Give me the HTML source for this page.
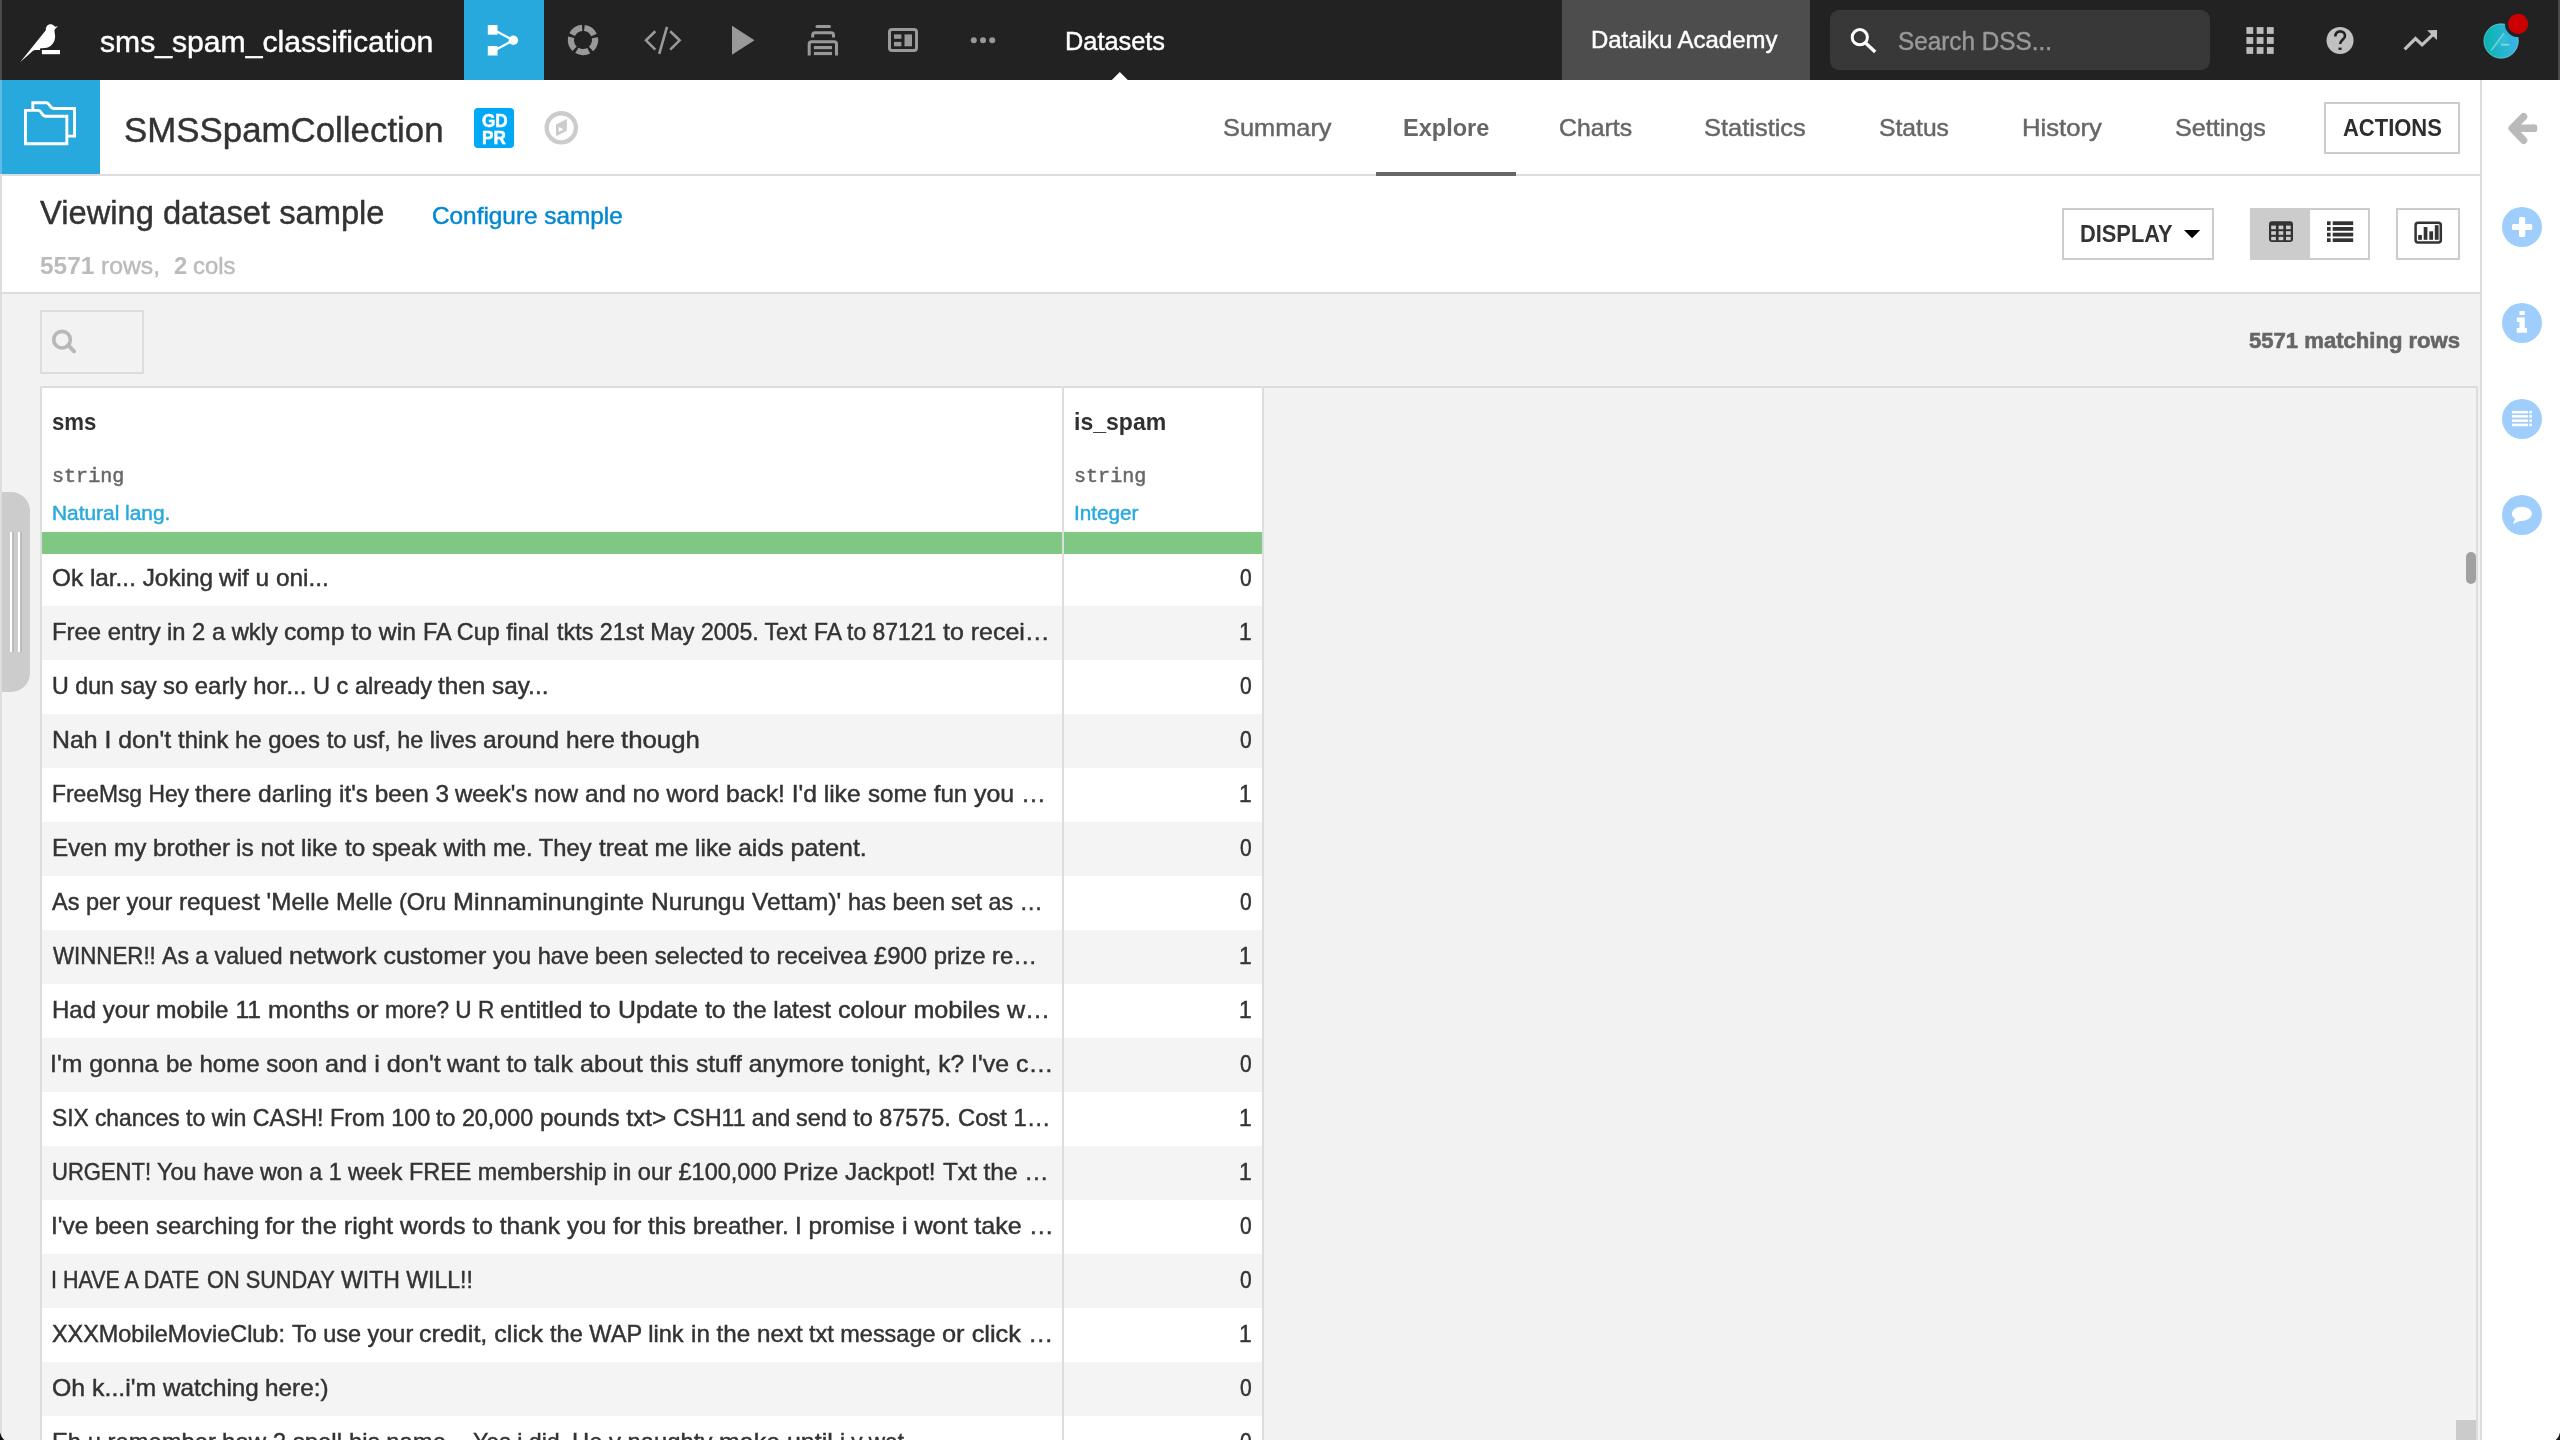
<!DOCTYPE html>
<html lang="en">
<head>
<meta charset="utf-8">
<title>SMSSpamCollection - Explore | Dataiku</title>
<style>
html,body{margin:0;padding:0;width:2560px;height:1440px;overflow:hidden;position:relative;background:#fff;font-family:"Liberation Sans",sans-serif}
.a{position:absolute;box-sizing:border-box}
.t{position:absolute;white-space:pre;line-height:1;transform-origin:0 0}
svg{position:absolute;overflow:visible}
</style>
</head>
<body>
<div id="nav" class="a" style="left:0;top:0;width:2560px;height:80px;background:#222222">
 <div class="a" style="left:464px;top:0;width:80px;height:80px;background:#28a9dd"></div>
 <div class="a" style="left:1562px;top:0;width:248px;height:80px;background:#4d4d4d"></div>
 <div class="a" style="left:1830px;top:10px;width:380px;height:60px;background:#383838;border-radius:9px"></div>
 <svg width="2560" height="80" viewBox="0 0 2560 80" style="left:0;top:0">
  <!-- bird logo -->
  <path fill="#fff" d="M20.1,62.2 L45.8,30.3 C45.6,28.8 46.2,26.6 47.6,25.3 C48.7,24.5 49.6,24.3 50.6,24.3 C51.9,24.3 53,24.9 53.9,25.7 L55.3,26.8 L58,26.2 L55.5,28.4 C54.6,29.6 54.4,30.4 54.5,31.3 C54.6,33.2 55.3,35.2 55.1,37.3 C54.9,39.8 54.2,41.8 52.8,43.6 C51.2,45.8 49.3,47.2 46.9,47.8 C44.8,48.3 42.5,48.3 40.3,48.2 L39.9,50 C37.8,50.1 35.4,49.7 33.3,50.6 Z"/>
  <rect x="41.9" y="50" width="18.1" height="4.2" fill="#fff"/>
  <!-- flow -->
  <rect x="487.8" y="25" width="9.7" height="9.7" fill="#fff"/>
  <rect x="487.8" y="46" width="9.7" height="9.5" fill="#fff"/>
  <circle cx="513.4" cy="40.3" r="4.7" fill="#fff"/>
  <path d="M494,30 L513.4,40.3 L494,50.7" stroke="#fff" stroke-width="2.2" fill="none"/>
  <!-- analysis ring -->
  <circle cx="583" cy="40" r="12.1" fill="none" stroke="#999" stroke-width="6.2" stroke-dasharray="12.4 2.8" transform="rotate(-83.3 583 40)"/>
  <!-- code -->
  <path d="M655.3,31.2 L646,40.3 L655.3,49.7 M667,26.9 L659.2,53.9 M670.2,31.2 L679.6,40.3 L670.2,49.7" stroke="#999" stroke-width="2.6" fill="none"/>
  <!-- play -->
  <path d="M732,25.8 L754.5,40.2 L732,54.7 Z" fill="#999"/>
  <!-- jobs -->
  <path d="M817,26.5 H829.5" stroke="#999" stroke-width="3" stroke-linecap="round" fill="none"/>
  <path d="M812.7,37.5 V35 Q812.7,32.7 815,32.7 H831.2 Q833.5,32.7 833.5,35 V37.5" stroke="#999" stroke-width="3" fill="none"/>
  <path d="M809.2,55.5 V44.2 Q809.2,41.8 811.6,41.8 H834.1 Q836.5,41.8 836.5,44.2 V55.5" stroke="#999" stroke-width="3" fill="none"/>
  <rect x="813.9" y="46" width="18.1" height="3.2" fill="#999"/>
  <rect x="813.9" y="51.9" width="18.1" height="3.2" fill="#999"/>
  <!-- dashboard -->
  <rect x="889.5" y="29.5" width="27" height="21" rx="2.5" fill="none" stroke="#999" stroke-width="3"/>
  <rect x="894" y="34.4" width="7.4" height="4.4" fill="#999"/>
  <rect x="894" y="41.9" width="7.4" height="4.4" fill="#999"/>
  <rect x="904.5" y="34.4" width="7.5" height="11.9" fill="#999"/>
  <!-- dots -->
  <circle cx="973.8" cy="40.2" r="3" fill="#999"/><circle cx="983" cy="40.2" r="3" fill="#999"/><circle cx="992.2" cy="40.2" r="3" fill="#999"/>
  <!-- pointer -->
  <path d="M1111.8,80 L1119.8,72 L1127.8,80 Z" fill="#fff"/>
  <!-- search -->
  <circle cx="1859.8" cy="37.2" r="7.6" fill="none" stroke="#fff" stroke-width="3"/>
  <path d="M1865.6,43 L1875.2,52" stroke="#fff" stroke-width="3.4" fill="none"/>
  <!-- apps grid -->
  <g fill="#bbb">
   <rect x="2246.4" y="27.1" width="6.8" height="6.8"/><rect x="2256.7" y="27.1" width="6.8" height="6.8"/><rect x="2266.9" y="27.1" width="6.8" height="6.8"/>
   <rect x="2246.4" y="37.1" width="6.8" height="6.8"/><rect x="2256.7" y="37.1" width="6.8" height="6.8"/><rect x="2266.9" y="37.1" width="6.8" height="6.8"/>
   <rect x="2246.4" y="47.1" width="6.8" height="6.8"/><rect x="2256.7" y="47.1" width="6.8" height="6.8"/><rect x="2266.9" y="47.1" width="6.8" height="6.8"/>
  </g>
  <!-- help -->
  <circle cx="2340.05" cy="40.4" r="13.5" fill="#c0c0c0"/>
  <path d="M2335.3,36.4 C2335.3,33.4 2337.3,31.4 2340.2,31.4 C2343.1,31.4 2345,33.4 2345,35.9 C2345,39.4 2340.1,40.3 2340.1,44" stroke="#222" stroke-width="2.6" fill="none"/>
  <rect x="2338.5" y="47.6" width="3.1" height="2.3" fill="#222"/>
  <!-- trend -->
  <path d="M2404.6,49.3 L2415.5,38.5 L2422.1,44.8 L2432.6,34.8" stroke="#c0c0c0" stroke-width="3.2" fill="none"/>
  <path d="M2427.2,30.2 L2437.1,30 L2436.9,40.1 Z" fill="#c0c0c0"/>
  <!-- avatar -->
  <defs><linearGradient id="av" x1="0" y1="0" x2="1" y2="0"><stop offset="0" stop-color="#08b4ad"/><stop offset="1" stop-color="#3cb4e8"/></linearGradient></defs>
  <circle cx="2501.1" cy="41" r="17.2" fill="url(#av)" stroke="#7fdde8" stroke-width="0.6"/>
  <path d="M2491.2,50.4 L2504,33 L2508.5,37.6 L2507,43.4 L2499.5,44.2 Z" fill="#3cc3d6" opacity="0.55"/>
  <path d="M2491.2,50.4 L2504,33" stroke="#7ad9e2" stroke-width="1.3" fill="none" opacity="0.9"/>
  <rect x="2500.9" y="43.8" width="8.5" height="1.9" fill="#8fe0e6" opacity="0.8"/>
  <circle cx="2518.1" cy="23.9" r="13.2" fill="#222"/>
  <circle cx="2518.1" cy="23.9" r="10.1" fill="#cc0000"/>
 </svg>
</div>
<div id="bar" class="a" style="left:0;top:80px;width:2480px;height:96px;background:#fff;border-bottom:2px solid #dddddd">
 <div class="a" style="left:0;top:0;width:100px;height:94px;background:#28a9dd"></div>
 <div class="a" style="left:474px;top:28px;width:40px;height:40px;background:#00a8f5;border-radius:4px"></div>
 <div class="a" style="left:1376px;top:92px;width:140px;height:4px;background:#666666"></div>
 <div class="a" style="left:2324px;top:22px;width:136px;height:52px;border:2px solid #cccccc;background:#fff"></div>
 <svg width="2480" height="96" viewBox="0 80 2480 96" style="left:0;top:0">
  <!-- dataset folders icon -->
  <path d="M32.8,109.2 V102.7 H46.3 C50,102.7 49.6,108.5 53.8,108.5 H74.55 V136.1 H68" stroke="#fff" stroke-width="2.9" fill="none"/>
  <path d="M25.45,143.7 V110.4 H38.2 C41.9,110.4 41.5,116.2 45.7,116.2 H66.85 V143.7 Z" stroke="#fff" stroke-width="2.9" fill="none"/>
  <!-- compass -->
  <circle cx="561.3" cy="127.8" r="14.6" fill="none" stroke="#cccccc" stroke-width="4.4"/>
  <path d="M566.9,119 L556,124.5 L556,136.3 L566.9,130.8 Z M558.8,126.9 L563.4,129.3 L558.8,132 Z" fill="#cccccc" fill-rule="evenodd"/>
 </svg>
</div>
<div id="subhead" class="a" style="left:0;top:176px;width:2480px;height:118px;background:#fff;border-bottom:2px solid #dddddd">
 <div class="a" style="left:2062px;top:32px;width:152px;height:52px;border:2px solid #cccccc;background:#fff"></div>
 <div class="a" style="left:2250px;top:32px;width:120px;height:52px;border:2px solid #cccccc;background:#fff"></div>
 <div class="a" style="left:2250px;top:32px;width:60px;height:52px;background:#cccccc"></div>
 <div class="a" style="left:2396px;top:32px;width:64px;height:52px;border:2px solid #cccccc;background:#fff"></div>
 <svg width="2480" height="118" viewBox="0 176 2480 118" style="left:0;top:0">
  <path d="M2184,230 H2200.2 L2192.1,238.2 Z" fill="#000"/>
  <!-- table icon -->
  <rect x="2269" y="221.3" width="24" height="20.6" rx="3" fill="#333"/>
  <g fill="#cccccc">
   <rect x="2271.2" y="225.6" width="4.7" height="3.6"/><rect x="2278.6" y="225.6" width="4.7" height="3.6"/><rect x="2286" y="225.6" width="4.7" height="3.6"/>
   <rect x="2271.2" y="231.2" width="4.7" height="3.6"/><rect x="2278.6" y="231.2" width="4.7" height="3.6"/><rect x="2286" y="231.2" width="4.7" height="3.6"/>
   <rect x="2271.2" y="236.8" width="4.7" height="3.4"/><rect x="2278.6" y="236.8" width="4.7" height="3.4"/><rect x="2286" y="236.8" width="4.7" height="3.4"/>
  </g>
  <!-- list icon -->
  <g fill="#333">
   <rect x="2327" y="221.3" width="3.6" height="3.8"/><rect x="2332.7" y="221.3" width="20.5" height="3.8"/>
   <rect x="2327" y="227" width="3.6" height="3.8"/><rect x="2332.7" y="227" width="20.5" height="3.8"/>
   <rect x="2327" y="232.7" width="3.6" height="3.8"/><rect x="2332.7" y="232.7" width="20.5" height="3.8"/>
   <rect x="2327" y="238.3" width="3.6" height="3.7"/><rect x="2332.7" y="238.3" width="20.5" height="3.7"/>
  </g>
  <!-- chart icon -->
  <rect x="2415.6" y="222.7" width="25.2" height="19.8" rx="2.5" fill="none" stroke="#333" stroke-width="2.5"/>
  <g fill="#333">
   <rect x="2418.2" y="235" width="3.7" height="4.8"/><rect x="2423.7" y="227" width="3.7" height="12.8"/>
   <rect x="2429.3" y="231.3" width="3.8" height="8.5"/><rect x="2434.8" y="225.2" width="3.8" height="14.6"/>
  </g>
 </svg>
</div>
<!--SUBHEAD-->
<div id="main" class="a" style="left:0;top:294px;width:2480px;height:1146px;background:#f2f2f2;overflow:hidden">
 <div class="a" style="left:40px;top:16px;width:104px;height:64px;border:2px solid #dddddd"></div>
 <svg width="104" height="64" viewBox="40 310 104 64" style="left:40px;top:16px">
  <circle cx="62.05" cy="339.7" r="8.3" fill="none" stroke="#b8b8b8" stroke-width="3.6"/>
  <path d="M68,345.2 L74.1,351.4" stroke="#b8b8b8" stroke-width="4" stroke-linecap="round" fill="none"/>
 </svg>
 <div id="tbl" class="a" style="left:40px;top:92px;width:2438px;height:1060px;border:2px solid #dddddd;border-bottom:none;overflow:hidden">
  <div class="a" style="left:0;top:0;width:1222px;height:1056px;background:#fff"></div>
  <div class="a" style="left:0;top:164px;width:1222px;height:54px;background:#ffffff"></div>
  <div class="a" style="left:0;top:218px;width:1222px;height:54px;background:#f4f4f4"></div>
  <div class="a" style="left:0;top:272px;width:1222px;height:54px;background:#ffffff"></div>
  <div class="a" style="left:0;top:326px;width:1222px;height:54px;background:#f4f4f4"></div>
  <div class="a" style="left:0;top:380px;width:1222px;height:54px;background:#ffffff"></div>
  <div class="a" style="left:0;top:434px;width:1222px;height:54px;background:#f4f4f4"></div>
  <div class="a" style="left:0;top:488px;width:1222px;height:54px;background:#ffffff"></div>
  <div class="a" style="left:0;top:542px;width:1222px;height:54px;background:#f4f4f4"></div>
  <div class="a" style="left:0;top:596px;width:1222px;height:54px;background:#ffffff"></div>
  <div class="a" style="left:0;top:650px;width:1222px;height:54px;background:#f4f4f4"></div>
  <div class="a" style="left:0;top:704px;width:1222px;height:54px;background:#ffffff"></div>
  <div class="a" style="left:0;top:758px;width:1222px;height:54px;background:#f4f4f4"></div>
  <div class="a" style="left:0;top:812px;width:1222px;height:54px;background:#ffffff"></div>
  <div class="a" style="left:0;top:866px;width:1222px;height:54px;background:#f4f4f4"></div>
  <div class="a" style="left:0;top:920px;width:1222px;height:54px;background:#ffffff"></div>
  <div class="a" style="left:0;top:974px;width:1222px;height:54px;background:#f4f4f4"></div>
  <div class="a" style="left:0;top:1028px;width:1222px;height:54px;background:#ffffff"></div>
  <div class="a" style="left:0;top:0;width:1222px;height:144px;background:#fff"></div>
  <div class="a" style="left:0;top:144px;width:1222px;height:22px;background:#81c784"></div>
  <div class="a" style="left:1020px;top:0;width:2px;height:1056px;background:#dddddd"></div>
  <div class="a" style="left:1220px;top:0;width:2px;height:1056px;background:#dddddd"></div>
  <div class="a" style="left:2424px;top:164px;width:10px;height:32px;border-radius:5px;background:#a0a0a0"></div>
  <div class="a" style="left:2414px;top:1032px;width:20px;height:20px;background:#cbcbcb"></div>
 </div>
</div>
<div id="right" class="a" style="left:2480px;top:80px;width:80px;height:1360px;background:#fff;border-left:2px solid #dddddd;overflow:hidden">
 <svg width="78" height="1360" viewBox="2482 80 78 1360" style="left:0;top:0">
  <!-- back arrow -->
  <path d="M2533.5,128.3 H2513 M2523.6,116.6 L2512.1,128.3 L2523.6,140.3" stroke="#bababa" stroke-width="7.4" stroke-linecap="round" stroke-linejoin="round" fill="none"/><rect x="2530.6" y="124.6" width="6.6" height="7.4" rx="2.2" fill="#bababa"/>
  <g fill="#9fcefd">
   <circle cx="2522" cy="227" r="20"/><circle cx="2522" cy="323" r="20"/><circle cx="2522" cy="419" r="20"/><circle cx="2522" cy="515" r="20"/>
  </g>
  <!-- plus -->
  <rect x="2512" y="224" width="20.2" height="6.1" rx="1.5" fill="#fff"/><rect x="2519" y="217.1" width="6.2" height="19.8" rx="1.5" fill="#fff"/>
  <!-- info -->
  <rect x="2519.5" y="311" width="5.3" height="4" fill="#fff"/>
  <path d="M2516.8,317.5 H2524.8 V328.1 H2527 V332.8 H2516.8 V328.1 H2519.5 V321.9 H2516.8 Z" fill="#fff"/>
  <!-- list -->
  <g fill="#fff">
   <rect x="2512" y="410.9" width="15.9" height="2.5"/><rect x="2529.2" y="410.9" width="2.8" height="2.5"/>
   <rect x="2512" y="415.1" width="15.9" height="2.5"/><rect x="2529.2" y="415.1" width="2.8" height="2.5"/>
   <rect x="2512" y="419.4" width="15.9" height="2.5"/><rect x="2529.2" y="419.4" width="2.8" height="2.5"/>
   <rect x="2512" y="423.7" width="15.9" height="2.5"/><rect x="2529.2" y="423.7" width="2.8" height="2.5"/>
  </g>
  <!-- chat -->
  <ellipse cx="2521.9" cy="513.8" rx="10.1" ry="7.1" fill="#fff"/>
  <path d="M2515.5,517.5 L2513,524 L2521,520.4 Z" fill="#fff"/>
 </svg>
</div>
<div id="edges">
 <div class="a" style="left:0;top:0;width:2px;height:80px;background:#4a4a4a"></div>
 <div class="a" style="left:0;top:80px;width:2px;height:94px;background:#62bbe6"></div>
 <div class="a" style="left:0;top:174px;width:2px;height:1266px;background:#dddddd"></div>
 <div class="a" style="left:2558px;top:0;width:2px;height:80px;background:#4a4a4a"></div>
 <div class="a" style="left:2px;top:492px;width:28px;height:200px;background:#cccccc;border-radius:0 19px 19px 0"></div>
 <div class="a" style="left:10px;top:532px;width:2px;height:120px;background:#ffffff"></div>
 <div class="a" style="left:12px;top:532px;width:2px;height:120px;background:#bbbbbb"></div>
 <div class="a" style="left:18px;top:532px;width:2px;height:120px;background:#ffffff"></div>
 <div class="a" style="left:20px;top:532px;width:2px;height:120px;background:#bbbbbb"></div>
 <svg width="2560" height="10" viewBox="0 1430 2560 10" style="left:0;top:1430px">
  <path d="M0,1432.6 Q1,1437 4.2,1440 L0,1440 Z" fill="#111"/>
  <path d="M2560,1432.4 Q2559,1437 2555.8,1440 L2560,1440 Z" fill="#1c1c1c"/>
 </svg>
</div>
<div id="texts" style="position:absolute;left:0;top:0;width:2560px;height:1440px;overflow:hidden;will-change:transform">
<span class="t" style="left:100.3px;top:26.5px;font-size:30px;-webkit-text-stroke:0.45px;color:#ffffff;transform:scaleX(1.0048)">sms_spam_classification</span>
<span class="t" style="left:1064.6px;top:28.0px;font-size:26px;-webkit-text-stroke:0.45px;color:#ffffff;transform:scaleX(0.9751)">Datasets</span>
<span class="t" style="left:1591.2px;top:28.1px;font-size:24.5px;-webkit-text-stroke:0.45px;color:#ffffff;transform:scaleX(0.9777)">Dataiku Academy</span>
<span class="t" style="left:1898.1px;top:27.8px;font-size:26px;-webkit-text-stroke:0.45px;color:#999999;transform:scaleX(0.9349)">Search DSS...</span>
<span class="t" style="left:124.3px;top:112.5px;font-size:35.5px;-webkit-text-stroke:0.45px;color:#333333;transform:scaleX(0.9817)">SMSSpamCollection</span>
<span class="t" style="left:481.7px;top:111.7px;font-size:18.6px;font-weight:700;-webkit-text-stroke:0.5px;color:#ffffff;transform:scaleX(0.9212)">GD</span>
<span class="t" style="left:482.3px;top:128.9px;font-size:18.6px;font-weight:700;-webkit-text-stroke:0.5px;color:#ffffff;transform:scaleX(0.9212)">PR</span>
<span class="t" style="left:1222.7px;top:115.5px;font-size:24px;-webkit-text-stroke:0.45px;color:#666666;transform:scaleX(1.0572)">Summary</span>
<span class="t" style="left:1402.8px;top:115.5px;font-size:24px;font-weight:700;color:#666666;transform:scaleX(0.9806)">Explore</span>
<span class="t" style="left:1559.0px;top:115.5px;font-size:24px;-webkit-text-stroke:0.45px;color:#666666;transform:scaleX(1.0332)">Charts</span>
<span class="t" style="left:1704.4px;top:115.5px;font-size:24px;-webkit-text-stroke:0.45px;color:#666666;transform:scaleX(1.0603)">Statistics</span>
<span class="t" style="left:1878.9px;top:115.5px;font-size:24px;-webkit-text-stroke:0.45px;color:#666666;transform:scaleX(1.0278)">Status</span>
<span class="t" style="left:2021.7px;top:115.5px;font-size:24px;-webkit-text-stroke:0.45px;color:#666666;transform:scaleX(1.0683)">History</span>
<span class="t" style="left:2174.5px;top:115.5px;font-size:24px;-webkit-text-stroke:0.45px;color:#666666;transform:scaleX(1.0464)">Settings</span>
<span class="t" style="left:2342.9px;top:116.8px;font-size:23.6px;font-weight:700;color:#2e2e2e;transform:scaleX(0.9314)">ACTIONS</span>
<span class="t" style="left:39.8px;top:195.9px;font-size:33.3px;-webkit-text-stroke:0.45px;color:#333333;transform:scaleX(0.9813)">Viewing dataset sample</span>
<span class="t" style="left:431.6px;top:203.6px;font-size:24px;-webkit-text-stroke:0.45px;color:#0288d1;transform:scaleX(1.0142)">Configure sample</span>
<span class="t" style="left:39.6px;top:253.8px;font-size:24px;font-weight:700;color:#bbbbbb;transform:scaleX(1.0162)">5571</span>
<span class="t" style="left:100.6px;top:253.8px;font-size:24px;-webkit-text-stroke:0.45px;color:#bbbbbb;transform:scaleX(1.0298)">rows,</span>
<span class="t" style="left:174.0px;top:253.8px;font-size:24px;font-weight:700;color:#bbbbbb;transform:scaleX(0.9923)">2</span>
<span class="t" style="left:193.0px;top:253.8px;font-size:24px;-webkit-text-stroke:0.45px;color:#bbbbbb;transform:scaleX(0.9957)">cols</span>
<span class="t" style="left:2079.8px;top:221.6px;font-size:24px;font-weight:700;color:#333333;transform:scaleX(0.9087)">DISPLAY</span>
<span class="t" style="left:2249.0px;top:329.9px;font-size:22.6px;font-weight:700;-webkit-text-stroke:0.6px;color:#666666;transform:scaleX(0.9772)">5571 matching rows</span>
<span class="t" style="left:51.7px;top:410.0px;font-size:24px;font-weight:700;color:#303030;transform:scaleX(0.9248)">sms</span>
<span class="t" style="left:52.1px;top:467.3px;font-size:20px;-webkit-text-stroke:0.45px;font-family:'Liberation Mono',monospace;color:#666666;transform:scaleX(1.0041)">string</span>
<span class="t" style="left:52.0px;top:502.7px;font-size:20px;-webkit-text-stroke:0.45px;color:#28a9dd;transform:scaleX(1.0438)">Natural lang.</span>
<span class="t" style="left:1073.9px;top:410.0px;font-size:24px;font-weight:700;color:#303030;transform:scaleX(0.9603)">is_spam</span>
<span class="t" style="left:1074.1px;top:467.3px;font-size:20px;-webkit-text-stroke:0.45px;font-family:'Liberation Mono',monospace;color:#666666;transform:scaleX(1.0041)">string</span>
<span class="t" style="left:1074.1px;top:502.7px;font-size:20px;-webkit-text-stroke:0.45px;color:#28a9dd;transform:scaleX(1.0356)">Integer</span>
<span class="t" style="left:51.5px;top:565.8px;font-size:24px;-webkit-text-stroke:0.45px;color:#333333;transform:scaleX(1.0147)">Ok lar... Joking </span>
<span class="t" style="left:219.3px;top:565.8px;font-size:24px;-webkit-text-stroke:0.45px;color:#333333;transform:scaleX(1.0170)">wif u oni...</span>
<span class="t" style="left:1239.6px;top:565.8px;font-size:24px;-webkit-text-stroke:0.45px;color:#333333;transform:scaleX(0.8769)">0</span>
<span class="t" style="left:51.5px;top:619.8px;font-size:24px;-webkit-text-stroke:0.45px;color:#333333;transform:scaleX(0.9945)">Free entry </span>
<span class="t" style="left:166.9px;top:619.8px;font-size:24px;-webkit-text-stroke:0.45px;color:#333333;transform:scaleX(0.9898)">in 2 a wkly </span>
<span class="t" style="left:284.4px;top:619.8px;font-size:24px;-webkit-text-stroke:0.45px;color:#333333;transform:scaleX(1.0303)">comp to win </span>
<span class="t" style="left:423.2px;top:619.8px;font-size:24px;-webkit-text-stroke:0.45px;color:#333333;transform:scaleX(0.9736)">FA Cup final </span>
<span class="t" style="left:557.0px;top:619.8px;font-size:24px;-webkit-text-stroke:0.45px;color:#333333;transform:scaleX(0.9722)">tkts 21st May </span>
<span class="t" style="left:700.9px;top:619.8px;font-size:24px;-webkit-text-stroke:0.45px;color:#333333;transform:scaleX(0.9590)">2005. Text </span>
<span class="t" style="left:813.5px;top:619.8px;font-size:24px;-webkit-text-stroke:0.45px;color:#333333;transform:scaleX(0.9534)">FA to 87121 </span>
<span class="t" style="left:943.3px;top:619.8px;font-size:24px;-webkit-text-stroke:0.45px;color:#333333;transform:scaleX(1.0401)">to recei…</span>
<span class="t" style="left:1238.6px;top:619.8px;font-size:24px;-webkit-text-stroke:0.45px;color:#333333;transform:scaleX(0.9500)">1</span>
<span class="t" style="left:51.5px;top:673.8px;font-size:24px;-webkit-text-stroke:0.45px;color:#333333;transform:scaleX(0.9690)">U dun say </span>
<span class="t" style="left:162.7px;top:673.8px;font-size:24px;-webkit-text-stroke:0.45px;color:#333333;transform:scaleX(0.9945)">so early hor... </span>
<span class="t" style="left:312.6px;top:673.8px;font-size:24px;-webkit-text-stroke:0.45px;color:#333333;transform:scaleX(0.9815)">U c already </span>
<span class="t" style="left:438.3px;top:673.8px;font-size:24px;-webkit-text-stroke:0.45px;color:#333333;transform:scaleX(1.0132)">then say...</span>
<span class="t" style="left:1239.6px;top:673.8px;font-size:24px;-webkit-text-stroke:0.45px;color:#333333;transform:scaleX(0.8769)">0</span>
<span class="t" style="left:51.5px;top:727.8px;font-size:24px;-webkit-text-stroke:0.45px;color:#333333;transform:scaleX(1.0340)">Nah I don&#x27;t </span>
<span class="t" style="left:177.6px;top:727.8px;font-size:24px;-webkit-text-stroke:0.45px;color:#333333;transform:scaleX(0.9948)">think he goes to </span>
<span class="t" style="left:352.8px;top:727.8px;font-size:24px;-webkit-text-stroke:0.45px;color:#333333;transform:scaleX(0.9746)">usf, he lives </span>
<span class="t" style="left:482.8px;top:727.8px;font-size:24px;-webkit-text-stroke:0.45px;color:#333333;transform:scaleX(1.0185)">around here </span>
<span class="t" style="left:621.4px;top:727.8px;font-size:24px;-webkit-text-stroke:0.45px;color:#333333;transform:scaleX(1.0741)">though</span>
<span class="t" style="left:1239.6px;top:727.8px;font-size:24px;-webkit-text-stroke:0.45px;color:#333333;transform:scaleX(0.8769)">0</span>
<span class="t" style="left:51.5px;top:781.8px;font-size:24px;-webkit-text-stroke:0.45px;color:#333333;transform:scaleX(0.9512)">FreeMsg Hey </span>
<span class="t" style="left:194.9px;top:781.8px;font-size:24px;-webkit-text-stroke:0.45px;color:#333333;transform:scaleX(1.0270)">there darling </span>
<span class="t" style="left:338.8px;top:781.8px;font-size:24px;-webkit-text-stroke:0.45px;color:#333333;transform:scaleX(1.0113)">it&#x27;s been 3 </span>
<span class="t" style="left:455.4px;top:781.8px;font-size:24px;-webkit-text-stroke:0.45px;color:#333333;transform:scaleX(0.9972)">week&#x27;s now </span>
<span class="t" style="left:585.0px;top:781.8px;font-size:24px;-webkit-text-stroke:0.45px;color:#333333;transform:scaleX(1.0176)">and no word </span>
<span class="t" style="left:726.2px;top:781.8px;font-size:24px;-webkit-text-stroke:0.45px;color:#333333;transform:scaleX(1.0250)">back! I&#x27;d like </span>
<span class="t" style="left:867.6px;top:781.8px;font-size:24px;-webkit-text-stroke:0.45px;color:#333333;transform:scaleX(1.0049)">some fun </span>
<span class="t" style="left:973.5px;top:781.8px;font-size:24px;-webkit-text-stroke:0.45px;color:#333333;transform:scaleX(1.0382)">you …</span>
<span class="t" style="left:1238.6px;top:781.8px;font-size:24px;-webkit-text-stroke:0.45px;color:#333333;transform:scaleX(0.9500)">1</span>
<span class="t" style="left:51.5px;top:835.8px;font-size:24px;-webkit-text-stroke:0.45px;color:#333333;transform:scaleX(1.0107)">Even my brother </span>
<span class="t" style="left:236.2px;top:835.8px;font-size:24px;-webkit-text-stroke:0.45px;color:#333333;transform:scaleX(1.0160)">is not like </span>
<span class="t" style="left:344.6px;top:835.8px;font-size:24px;-webkit-text-stroke:0.45px;color:#333333;transform:scaleX(1.0105)">to speak with </span>
<span class="t" style="left:492.9px;top:835.8px;font-size:24px;-webkit-text-stroke:0.45px;color:#333333;transform:scaleX(0.9896)">me. They </span>
<span class="t" style="left:598.5px;top:835.8px;font-size:24px;-webkit-text-stroke:0.45px;color:#333333;transform:scaleX(1.0146)">treat me like </span>
<span class="t" style="left:737.9px;top:835.8px;font-size:24px;-webkit-text-stroke:0.45px;color:#333333;transform:scaleX(1.0377)">aids patent.</span>
<span class="t" style="left:1239.6px;top:835.8px;font-size:24px;-webkit-text-stroke:0.45px;color:#333333;transform:scaleX(0.8769)">0</span>
<span class="t" style="left:52.1px;top:889.8px;font-size:24px;-webkit-text-stroke:0.45px;color:#333333;transform:scaleX(0.9809)">As per your </span>
<span class="t" style="left:179.0px;top:889.8px;font-size:24px;-webkit-text-stroke:0.45px;color:#333333;transform:scaleX(1.0102)">request &#x27;Melle </span>
<span class="t" style="left:335.9px;top:889.8px;font-size:24px;-webkit-text-stroke:0.45px;color:#333333;transform:scaleX(0.9833)">Melle (Oru </span>
<span class="t" style="left:452.6px;top:889.8px;font-size:24px;-webkit-text-stroke:0.45px;color:#333333;transform:scaleX(1.0452)">Minnaminunginte </span>
<span class="t" style="left:650.6px;top:889.8px;font-size:24px;-webkit-text-stroke:0.45px;color:#333333;transform:scaleX(1.0229)">Nurungu Vettam)&#x27; </span>
<span class="t" style="left:847.7px;top:889.8px;font-size:24px;-webkit-text-stroke:0.45px;color:#333333;transform:scaleX(0.9826)">has been </span>
<span class="t" style="left:951.3px;top:889.8px;font-size:24px;-webkit-text-stroke:0.45px;color:#333333;transform:scaleX(0.9706)">set as …</span>
<span class="t" style="left:1239.6px;top:889.8px;font-size:24px;-webkit-text-stroke:0.45px;color:#333333;transform:scaleX(0.8769)">0</span>
<span class="t" style="left:52.5px;top:943.8px;font-size:24px;-webkit-text-stroke:0.45px;color:#333333;transform:scaleX(0.9290)">WINNER!! </span>
<span class="t" style="left:161.5px;top:943.8px;font-size:24px;-webkit-text-stroke:0.45px;color:#333333;transform:scaleX(0.9618)">As a valued </span>
<span class="t" style="left:288.5px;top:943.8px;font-size:24px;-webkit-text-stroke:0.45px;color:#333333;transform:scaleX(1.0412)">network customer </span>
<span class="t" style="left:492.6px;top:943.8px;font-size:24px;-webkit-text-stroke:0.45px;color:#333333;transform:scaleX(0.9841)">you have </span>
<span class="t" style="left:595.0px;top:943.8px;font-size:24px;-webkit-text-stroke:0.45px;color:#333333;transform:scaleX(0.9934)">been selected </span>
<span class="t" style="left:750.1px;top:943.8px;font-size:24px;-webkit-text-stroke:0.45px;color:#333333;transform:scaleX(0.9962)">to receivea </span>
<span class="t" style="left:873.7px;top:943.8px;font-size:24px;-webkit-text-stroke:0.45px;color:#333333;transform:scaleX(0.9945)">£900 prize re…</span>
<span class="t" style="left:1238.6px;top:943.8px;font-size:24px;-webkit-text-stroke:0.45px;color:#333333;transform:scaleX(0.9500)">1</span>
<span class="t" style="left:51.5px;top:997.8px;font-size:24px;-webkit-text-stroke:0.45px;color:#333333;transform:scaleX(1.0014)">Had your </span>
<span class="t" style="left:155.7px;top:997.8px;font-size:24px;-webkit-text-stroke:0.45px;color:#333333;transform:scaleX(1.0262)">mobile 11 </span>
<span class="t" style="left:267.5px;top:997.8px;font-size:24px;-webkit-text-stroke:0.45px;color:#333333;transform:scaleX(1.0363)">months or </span>
<span class="t" style="left:385.1px;top:997.8px;font-size:24px;-webkit-text-stroke:0.45px;color:#333333;transform:scaleX(0.9414)">more? U R </span>
<span class="t" style="left:500.4px;top:997.8px;font-size:24px;-webkit-text-stroke:0.45px;color:#333333;transform:scaleX(1.0646)">entitled to </span>
<span class="t" style="left:618.4px;top:997.8px;font-size:24px;-webkit-text-stroke:0.45px;color:#333333;transform:scaleX(1.0342)">Update to </span>
<span class="t" style="left:732.9px;top:997.8px;font-size:24px;-webkit-text-stroke:0.45px;color:#333333;transform:scaleX(1.0070)">the latest </span>
<span class="t" style="left:837.7px;top:997.8px;font-size:24px;-webkit-text-stroke:0.45px;color:#333333;transform:scaleX(1.0466)">colour mobiles w…</span>
<span class="t" style="left:1238.6px;top:997.8px;font-size:24px;-webkit-text-stroke:0.45px;color:#333333;transform:scaleX(0.9500)">1</span>
<span class="t" style="left:50.4px;top:1051.8px;font-size:24px;-webkit-text-stroke:0.45px;color:#333333;transform:scaleX(1.0352)">I&#x27;m gonna </span>
<span class="t" style="left:165.7px;top:1051.8px;font-size:24px;-webkit-text-stroke:0.45px;color:#333333;transform:scaleX(1.0014)">be home soon </span>
<span class="t" style="left:324.6px;top:1051.8px;font-size:24px;-webkit-text-stroke:0.45px;color:#333333;transform:scaleX(1.0526)">and i don&#x27;t </span>
<span class="t" style="left:447.4px;top:1051.8px;font-size:24px;-webkit-text-stroke:0.45px;color:#333333;transform:scaleX(1.0364)">want to talk </span>
<span class="t" style="left:580.2px;top:1051.8px;font-size:24px;-webkit-text-stroke:0.45px;color:#333333;transform:scaleX(1.0443)">about this </span>
<span class="t" style="left:695.8px;top:1051.8px;font-size:24px;-webkit-text-stroke:0.45px;color:#333333;transform:scaleX(1.0216)">stuff anymore </span>
<span class="t" style="left:850.7px;top:1051.8px;font-size:24px;-webkit-text-stroke:0.45px;color:#333333;transform:scaleX(1.0209)">tonight, k? </span>
<span class="t" style="left:970.5px;top:1051.8px;font-size:24px;-webkit-text-stroke:0.45px;color:#333333;transform:scaleX(1.0382)">I&#x27;ve c…</span>
<span class="t" style="left:1239.6px;top:1051.8px;font-size:24px;-webkit-text-stroke:0.45px;color:#333333;transform:scaleX(0.8769)">0</span>
<span class="t" style="left:51.6px;top:1105.8px;font-size:24px;-webkit-text-stroke:0.45px;color:#333333;transform:scaleX(0.9479)">SIX chances </span>
<span class="t" style="left:185.6px;top:1105.8px;font-size:24px;-webkit-text-stroke:0.45px;color:#333333;transform:scaleX(0.9636)">to win CASH! </span>
<span class="t" style="left:329.5px;top:1105.8px;font-size:24px;-webkit-text-stroke:0.45px;color:#333333;transform:scaleX(0.9763)">From 100 </span>
<span class="t" style="left:436.3px;top:1105.8px;font-size:24px;-webkit-text-stroke:0.45px;color:#333333;transform:scaleX(0.9707)">to 20,000 </span>
<span class="t" style="left:539.9px;top:1105.8px;font-size:24px;-webkit-text-stroke:0.45px;color:#333333;transform:scaleX(1.0105)">pounds txt&gt; </span>
<span class="t" style="left:672.7px;top:1105.8px;font-size:24px;-webkit-text-stroke:0.45px;color:#333333;transform:scaleX(0.9589)">CSH11 and </span>
<span class="t" style="left:796.4px;top:1105.8px;font-size:24px;-webkit-text-stroke:0.45px;color:#333333;transform:scaleX(0.9744)">send to 87575. </span>
<span class="t" style="left:957.6px;top:1105.8px;font-size:24px;-webkit-text-stroke:0.45px;color:#333333;transform:scaleX(0.9926)">Cost 1…</span>
<span class="t" style="left:1238.6px;top:1105.8px;font-size:24px;-webkit-text-stroke:0.45px;color:#333333;transform:scaleX(0.9500)">1</span>
<span class="t" style="left:51.6px;top:1159.8px;font-size:24px;-webkit-text-stroke:0.45px;color:#333333;transform:scaleX(0.9167)">URGENT! </span>
<span class="t" style="left:156.7px;top:1159.8px;font-size:24px;-webkit-text-stroke:0.45px;color:#333333;transform:scaleX(0.9783)">You have </span>
<span class="t" style="left:260.3px;top:1159.8px;font-size:24px;-webkit-text-stroke:0.45px;color:#333333;transform:scaleX(0.9709)">won a 1 week </span>
<span class="t" style="left:409.2px;top:1159.8px;font-size:24px;-webkit-text-stroke:0.45px;color:#333333;transform:scaleX(0.9743)">FREE membership </span>
<span class="t" style="left:613.2px;top:1159.8px;font-size:24px;-webkit-text-stroke:0.45px;color:#333333;transform:scaleX(0.9811)">in our £100,000 </span>
<span class="t" style="left:783.4px;top:1159.8px;font-size:24px;-webkit-text-stroke:0.45px;color:#333333;transform:scaleX(1.0109)">Prize Jackpot! </span>
<span class="t" style="left:942.5px;top:1159.8px;font-size:24px;-webkit-text-stroke:0.45px;color:#333333;transform:scaleX(1.0146)">Txt the …</span>
<span class="t" style="left:1238.6px;top:1159.8px;font-size:24px;-webkit-text-stroke:0.45px;color:#333333;transform:scaleX(0.9500)">1</span>
<span class="t" style="left:50.5px;top:1213.8px;font-size:24px;-webkit-text-stroke:0.45px;color:#333333;transform:scaleX(1.0165)">I&#x27;ve been </span>
<span class="t" style="left:155.5px;top:1213.8px;font-size:24px;-webkit-text-stroke:0.45px;color:#333333;transform:scaleX(0.9916)">searching </span>
<span class="t" style="left:265.3px;top:1213.8px;font-size:24px;-webkit-text-stroke:0.45px;color:#333333;transform:scaleX(1.0546)">for the right </span>
<span class="t" style="left:400.3px;top:1213.8px;font-size:24px;-webkit-text-stroke:0.45px;color:#333333;transform:scaleX(1.0247)">words to thank </span>
<span class="t" style="left:567.1px;top:1213.8px;font-size:24px;-webkit-text-stroke:0.45px;color:#333333;transform:scaleX(1.0132)">you for this </span>
<span class="t" style="left:692.8px;top:1213.8px;font-size:24px;-webkit-text-stroke:0.45px;color:#333333;transform:scaleX(1.0097)">breather. </span>
<span class="t" style="left:795.2px;top:1213.8px;font-size:24px;-webkit-text-stroke:0.45px;color:#333333;transform:scaleX(1.0138)">I promise </span>
<span class="t" style="left:902.0px;top:1213.8px;font-size:24px;-webkit-text-stroke:0.45px;color:#333333;transform:scaleX(1.0432)">i wont take …</span>
<span class="t" style="left:1239.6px;top:1213.8px;font-size:24px;-webkit-text-stroke:0.45px;color:#333333;transform:scaleX(0.8769)">0</span>
<span class="t" style="left:50.7px;top:1267.8px;font-size:24px;-webkit-text-stroke:0.45px;color:#333333;transform:scaleX(0.8941)">I HAVE A DATE </span>
<span class="t" style="left:207.3px;top:1267.8px;font-size:24px;-webkit-text-stroke:0.45px;color:#333333;transform:scaleX(0.9060)">ON SUNDAY </span>
<span class="t" style="left:341.0px;top:1267.8px;font-size:24px;-webkit-text-stroke:0.45px;color:#333333;transform:scaleX(0.9605)">WITH WILL!!</span>
<span class="t" style="left:1239.6px;top:1267.8px;font-size:24px;-webkit-text-stroke:0.45px;color:#333333;transform:scaleX(0.8769)">0</span>
<span class="t" style="left:52.1px;top:1321.8px;font-size:24px;-webkit-text-stroke:0.45px;color:#333333;transform:scaleX(0.9754)">XXXMobileMovieClub: </span>
<span class="t" style="left:291.5px;top:1321.8px;font-size:24px;-webkit-text-stroke:0.45px;color:#333333;transform:scaleX(0.9770)">To use your </span>
<span class="t" style="left:419.2px;top:1321.8px;font-size:24px;-webkit-text-stroke:0.45px;color:#333333;transform:scaleX(1.0454)">credit, click </span>
<span class="t" style="left:550.2px;top:1321.8px;font-size:24px;-webkit-text-stroke:0.45px;color:#333333;transform:scaleX(0.9823)">the WAP link </span>
<span class="t" style="left:690.8px;top:1321.8px;font-size:24px;-webkit-text-stroke:0.45px;color:#333333;transform:scaleX(1.0094)">in the next </span>
<span class="t" style="left:809.3px;top:1321.8px;font-size:24px;-webkit-text-stroke:0.45px;color:#333333;transform:scaleX(0.9777)">txt message </span>
<span class="t" style="left:942.2px;top:1321.8px;font-size:24px;-webkit-text-stroke:0.45px;color:#333333;transform:scaleX(1.0578)">or click …</span>
<span class="t" style="left:1238.6px;top:1321.8px;font-size:24px;-webkit-text-stroke:0.45px;color:#333333;transform:scaleX(0.9500)">1</span>
<span class="t" style="left:51.5px;top:1375.8px;font-size:24px;-webkit-text-stroke:0.45px;color:#333333;transform:scaleX(1.0355)">Oh k...i&#x27;m </span>
<span class="t" style="left:162.5px;top:1375.8px;font-size:24px;-webkit-text-stroke:0.45px;color:#333333;transform:scaleX(1.0117)">watching </span>
<span class="t" style="left:265.1px;top:1375.8px;font-size:24px;-webkit-text-stroke:0.45px;color:#333333;transform:scaleX(1.0131)">here:)</span>
<span class="t" style="left:1239.6px;top:1375.8px;font-size:24px;-webkit-text-stroke:0.45px;color:#333333;transform:scaleX(0.8769)">0</span>
<span class="t" style="left:51.5px;top:1429.8px;font-size:24px;-webkit-text-stroke:0.45px;color:#333333;transform:scaleX(0.9915)">Eh u remember </span>
<span class="t" style="left:222.1px;top:1429.8px;font-size:24px;-webkit-text-stroke:0.45px;color:#333333;transform:scaleX(0.9997)">how 2 spell </span>
<span class="t" style="left:348.8px;top:1429.8px;font-size:24px;-webkit-text-stroke:0.45px;color:#333333;transform:scaleX(0.9971)">his name... </span>
<span class="t" style="left:472.5px;top:1429.8px;font-size:24px;-webkit-text-stroke:0.45px;color:#333333;transform:scaleX(0.9656)">Yes i did. </span>
<span class="t" style="left:572.1px;top:1429.8px;font-size:24px;-webkit-text-stroke:0.45px;color:#333333;transform:scaleX(0.9920)">He v naughty </span>
<span class="t" style="left:719.0px;top:1429.8px;font-size:24px;-webkit-text-stroke:0.45px;color:#333333;transform:scaleX(1.0401)">make until </span>
<span class="t" style="left:839.8px;top:1429.8px;font-size:24px;-webkit-text-stroke:0.45px;color:#333333;transform:scaleX(0.9401)">i v wet.</span>
<span class="t" style="left:1239.6px;top:1429.8px;font-size:24px;-webkit-text-stroke:0.45px;color:#333333;transform:scaleX(0.8769)">0</span>
</div>
</body>
</html>
